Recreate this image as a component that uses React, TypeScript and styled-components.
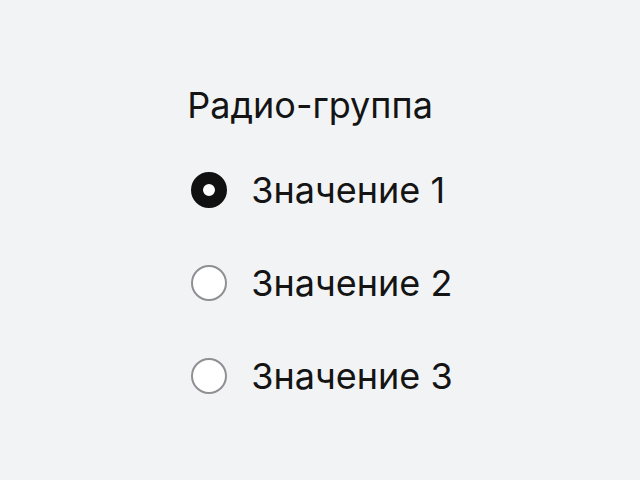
import { useState } from "react";
import styled, { createGlobalStyle } from "styled-components";

const GlobalStyle = createGlobalStyle`
  html, body {
    margin: 0;
    padding: 0;
    background: #f2f3f5;
  }
  body {
    font-family: Inter, "Noto Sans", sans-serif;
    color: #141414;
  }
`;

const Page = styled.div`
  min-height: 100vh;
  display: flex;
  align-items: center;
  justify-content: center;
`;

const Group = styled.fieldset`
  border: 0;
  margin: 0;
  padding: 0;
  display: flex;
  flex-direction: column;
  gap: 49px;
`;

const Legend = styled.div`
  font-size: 36px;
  line-height: 44px;
  margin-bottom: -8px;
`;

const Option = styled.label`
  display: flex;
  align-items: center;
  gap: 20px;
  height: 44px;
  cursor: pointer;
  font-size: 36px;
  line-height: 44px;
`;

const Box = styled.span`
  width: 44px;
  height: 44px;
  display: flex;
  align-items: center;
  justify-content: center;
  flex-shrink: 0;
`;

const Circle = styled.span<{ $checked: boolean }>`
  box-sizing: border-box;
  width: 36px;
  height: 36px;
  border-radius: 50%;
  background: #fff;
  border: ${(p) => (p.$checked ? "12px solid #111" : "2px solid #8f8f94")};
`;

const Hidden = styled.input`
  position: absolute;
  opacity: 0;
  width: 0;
  height: 0;
`;

const options = ["Значение 1", "Значение 2", "Значение 3"];

export default function App() {
  const [value, setValue] = useState(0);

  return (
    <Page>
      <GlobalStyle />
      <Group>
        <Legend>Радио-группа</Legend>
        {options.map((o, i) => (
          <Option key={o}>
            <Hidden
              type='radio'
              name='group'
              checked={value === i}
              onChange={() => setValue(i)}
            />
            <Box>
              <Circle $checked={value === i} />
            </Box>
            {o}
          </Option>
        ))}
      </Group>
    </Page>
  );
}
